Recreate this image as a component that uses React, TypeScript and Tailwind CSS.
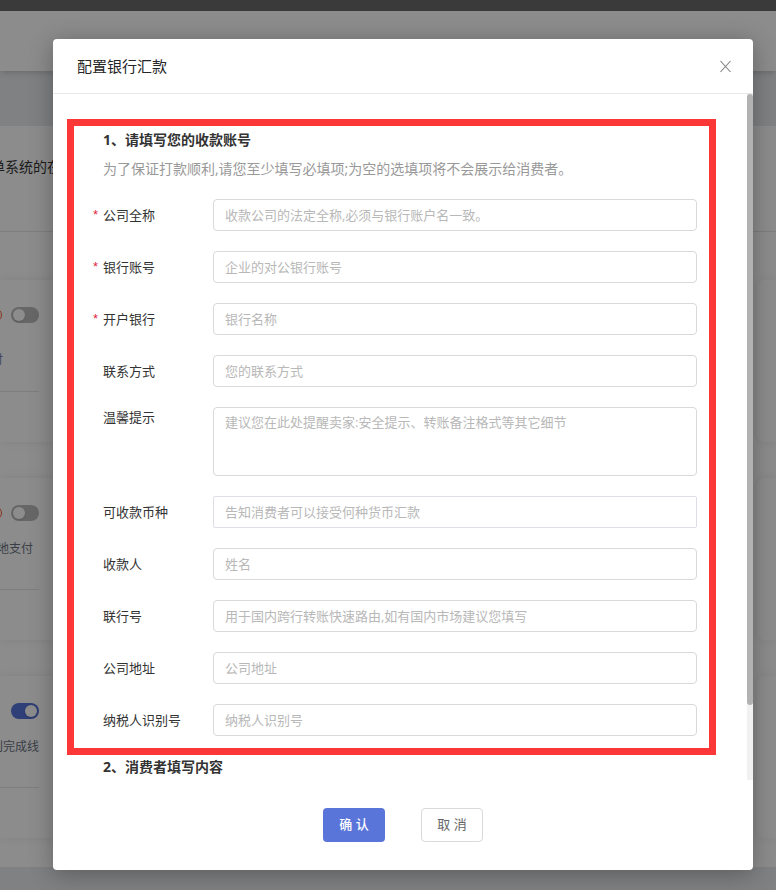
import { useState } from 'react'

const fields = [
  { id: 'company', label: '公司全称', hint: '收款公司的法定全称,必须与银行账户名一致。', required: true },
  { id: 'account', label: '银行账号', hint: '企业的对公银行账号', required: true },
  { id: 'bank', label: '开户银行', hint: '银行名称', required: true },
  { id: 'contact', label: '联系方式', hint: '您的联系方式' },
  { id: 'tips', label: '温馨提示', hint: '建议您在此处提醒卖家:安全提示、转账备注格式等其它细节', area: true },
  { id: 'currency', label: '可收款币种', hint: '告知消费者可以接受何种货币汇款', plain: true },
  { id: 'payee', label: '收款人', hint: '姓名' },
  { id: 'cnaps', label: '联行号', hint: '用于国内跨行转账快速路由,如有国内市场建议您填写' },
  { id: 'address', label: '公司地址', hint: '公司地址' },
  { id: 'tax', label: '纳税人识别号', hint: '纳税人识别号' }
]

const cards = [
  { text: '付', style: 'pt-7 pr-9 text-[#7a7fa8]', on: false, info: true },
  { text: '地支付', style: 'pt-[19px] pr-[6px] text-gray-500', on: false, info: true },
  { text: '到完成线', style: 'pt-[19px] text-gray-500', on: true, info: false }
]

const Switch = ({ on }: { on: boolean }) => {
  const [checked, setChecked] = useState(on)
  return (
    <button
      role="switch"
      aria-checked={checked}
      aria-label="启用"
      onClick={() => setChecked(!checked)}
      className={
        checked
          ? 'flex h-4 w-7 shrink-0 items-center justify-end rounded-full bg-[#5673d9] p-[2px]'
          : 'flex h-4 w-7 shrink-0 items-center rounded-full bg-[#bcbcbc] p-[2px]'
      }
    >
      <span className="h-3 w-3 rounded-full bg-white shadow-sm" />
    </button>
  )
}

const Background = () => {
  return (
    <div className="min-h-screen overflow-hidden bg-[#e8ebef]">
      <div className="h-[11px] bg-[#6b6b6b]" />
      <header className="h-15 bg-white shadow-md" />
      <main className="mt-[55px] bg-white pb-[29px]">
        <p className="-ml-[9px] border-b border-[#e5e5e5] pt-[29px] pb-[52px] text-sm leading-6 whitespace-nowrap text-[#333]">
          单系统的在
        </p>
        <div className="flex flex-col gap-9 pt-12">
          {cards.map((card) => (
            <div key={card.text} className="flex h-[162px] justify-between">
              <section className="w-15 rounded-r-lg pt-[27px] pr-[21px] shadow-[0_0_10px_rgba(0,0,0,0.08)]">
                <div className="flex justify-end gap-[9px]">
                  {card.info && (
                    <span className="mt-px h-[14px] w-[14px] shrink-0 rounded-full border border-[#ff5a36]" />
                  )}
                  <Switch on={card.on} />
                </div>
                <div className="h-[69px] border-b border-[#e5e5e5]">
                  <p className={`flex justify-end text-xs leading-[18px] whitespace-nowrap ${card.style}`}>
                    {card.text}
                  </p>
                </div>
              </section>
              <section className="w-[19px] rounded-l-lg shadow-[0_0_10px_rgba(0,0,0,0.08)]" />
            </div>
          ))}
        </div>
      </main>
    </div>
  )
}

const Field = ({ id, label, hint, required, area, plain }: any) => {
  return (
    <div className="flex items-start text-[13px]">
      <label
        htmlFor={id}
        className={
          area
            ? 'flex w-[120px] shrink-0 items-start leading-5 text-[#333]'
            : 'flex w-[120px] shrink-0 items-start leading-8 text-[#333]'
        }
      >
        <span className="w-[10px] font-['Liberation_Sans',sans-serif] text-[#e0283c]">
          {required ? '*' : ''}
        </span>
        {label}
      </label>
      {area ? (
        <textarea
          id={id}
          placeholder={hint}
          className="block h-[69px] min-w-0 flex-1 resize-none rounded border border-[#d9d9d9] bg-white px-[11px] py-1 leading-5 outline-none placeholder:text-[#b8b8b8]"
        />
      ) : (
        <input
          id={id}
          type="text"
          placeholder={hint}
          className={
            plain
              ? 'h-8 min-w-0 flex-1 rounded-xs border border-[#dcdfe6] bg-white px-[11px] outline-none placeholder:text-[#b8b8b8]'
              : 'h-8 min-w-0 flex-1 rounded border border-[#d9d9d9] bg-white px-[11px] outline-none placeholder:text-[#b8b8b8]'
          }
        />
      )}
    </div>
  )
}

const Modal = () => {
  return (
    <div
      role="dialog"
      aria-labelledby="modal-title"
      className="w-full rounded bg-white shadow-[0_4px_24px_rgba(0,0,0,0.3)]"
    >
      <div className="flex h-[55px] items-center justify-between border-b border-[#e8e8e8] px-6">
        <h1 id="modal-title" className="text-[15px] text-[#262626]">
          配置银行汇款
        </h1>
        <button aria-label="关闭" className="-mr-[3px] text-[#808080]">
          <svg width="13" height="13" viewBox="0 0 13 13" fill="none" stroke="currentColor" strokeWidth="1.1">
            <path d="M1.5 1l10 11M11.5 1l-10 11" />
          </svg>
        </button>
      </div>

      <div className="flex">
        <div className="min-w-0 flex-1 pt-[25px] pr-[31px] pb-px pl-[14px]">
          <div className="border-[7px] border-[#fb3737] pr-3 pb-3 pl-[19px]">
            <h2 className="pl-[10px] text-sm leading-7 font-bold text-[#333]">1、请填写您的收款账号</h2>
            <p className="pl-[10px] text-sm leading-[30px] text-[#999]">
              为了保证打款顺利,请您至少填写必填项;为空的选填项将不会展示给消费者。
            </p>
            <form className="mt-[15px] flex flex-col gap-5">
              {fields.map((field) => (
                <Field key={field.id} {...field} />
              ))}
            </form>
          </div>
          <h2 className="pl-9 text-sm leading-6 font-bold text-[#333]">2、消费者填写内容</h2>
        </div>
        <div className="w-[6px] bg-[#f1f1f1]">
          <div className="h-[89%] rounded-full bg-[#b2b2b2]" />
        </div>
      </div>

      <div className="flex justify-center gap-9 py-7 text-[13px]">
        <button className="h-[34px] w-[62px] rounded bg-[#5975d9] font-medium text-white">确 认</button>
        <button className="h-[34px] w-[62px] rounded border border-[#d9d9d9] bg-white text-[#666]">取 消</button>
      </div>
    </div>
  )
}

export default function App() {
  return (
    <div className="relative font-['Open_Sans','Noto_Sans_CJK_SC',sans-serif]">
      <Background />
      <div className="absolute inset-0 bg-black/45 pt-[39px] pr-[23px] pl-[53px]">
        <Modal />
      </div>
    </div>
  )
}
